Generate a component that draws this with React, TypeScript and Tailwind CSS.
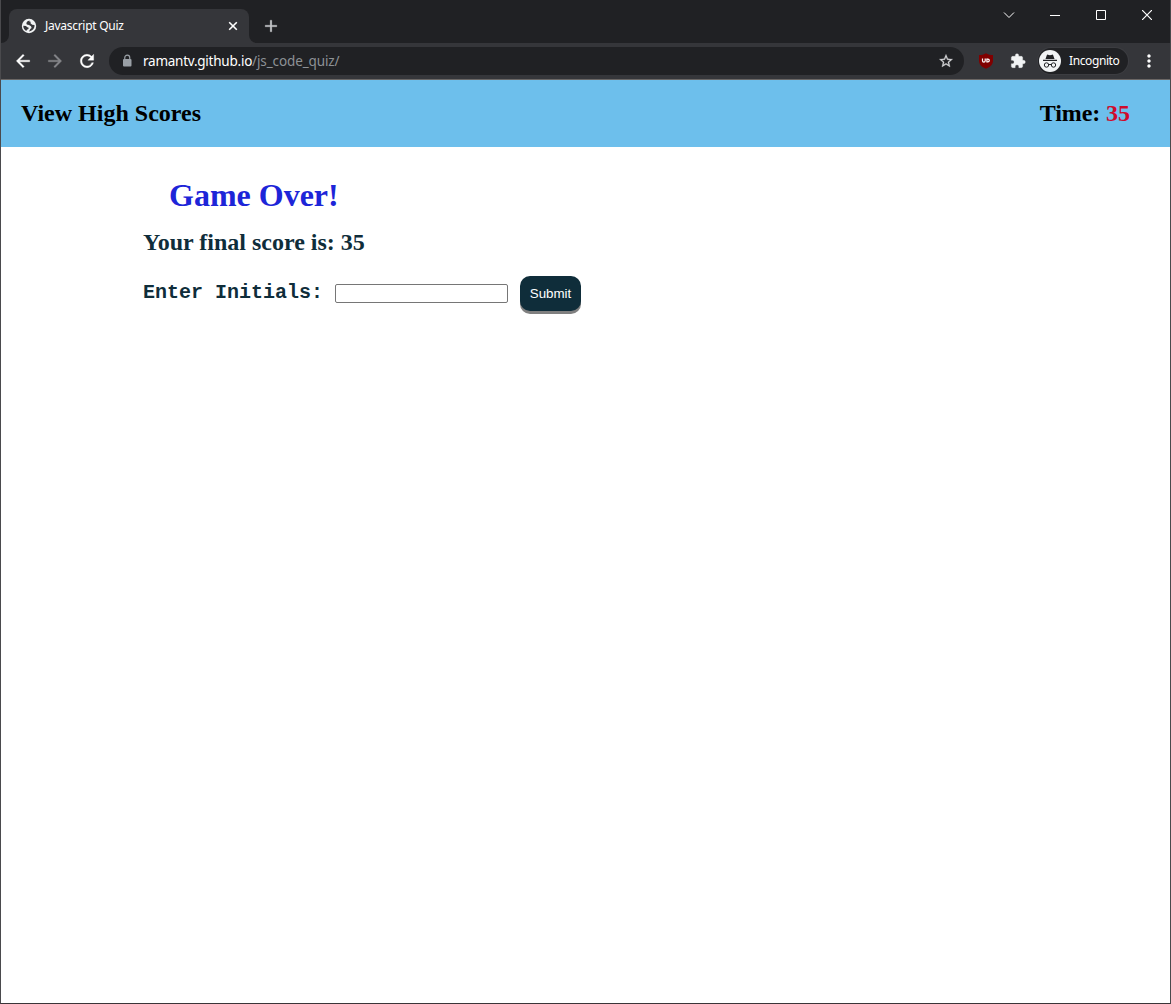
import { MdArrowBack, MdArrowForward, MdRefresh, MdStarBorder, MdExtension, MdMoreVert, MdAdd } from "react-icons/md";

function GlobeIcon() {
  return (
    <svg width="16" height="16" viewBox="0 0 16 16" className="mr-2 shrink-0">
      <circle cx="8" cy="8" r="7.2" fill="#f1f3f4" />
      <path d="M8.6 2.4 6.5 3.3 5.3 5l.5 1.6 2.2.5 2 1.1.6 1.7-1.3 1.2-1.3 2.4c2.2-.2 4.2-1.5 5-3.4.5-1.1.6-2 .5-3l-2.300-.3-1.700-1.500.2-1.500-1.400-.4zM2.300 7.700l2.600.3 1.500 1.200 1.300.6-.3 1.300-1.500.6-.6 1.300C3.300 11.900 2.200 10 2.300 7.700z" fill="#35363a" />
    </svg>
  );
}

function LockIcon() {
  return (
    <svg width="14" height="14" viewBox="0 0 14 14" className="shrink-0">
      <rect x="3" y="5" width="8.500" height="7.500" rx="1" fill="#9aa0a6" />
      <path d="M4.750 5.500V3.700a2.500 2.500 0 0 1 5 0v1.800" fill="none" stroke="#9aa0a6" strokeWidth="1.200" />
    </svg>
  );
}

function ShieldIcon() {
  return (
    <svg width="16" height="16" viewBox="0 0 16 16" className="ml-3.5 shrink-0">
      <path d="M8 .3c2 1.300 4.300 1.800 7 1.800v5.400c0 4.200-2.700 6.500-7 8.200-4.300-1.700-7-4-7-8.200V2.100C3.700 2.100 6 1.600 8 .3z" fill="#800000" />
      <path d="M4.500 5.500v2.200a1.350 1.350 0 0 0 2.700 0V5.500M8.900 6.100h1a1.400 1.400 0 0 1 0 2.800h-1z" fill="none" stroke="#fff" strokeWidth="1.200" />
    </svg>
  );
}

function IncognitoIcon() {
  return (
    <svg width="22" height="22" viewBox="0 0 22 22" className="shrink-0">
      <circle cx="11" cy="11" r="11" fill="#f1f3f4" />
      <path d="M4 9.800h14V11H4zM6.500 8.900l1.300-3.700c.2-.5.6-.7 1.100-.5l2.100.5 2.100-.5c.5-.2.9 0 1.100.5l1.300 3.700z" fill="#202124" />
      <g fill="none" stroke="#202124">
        <circle cx="7.500" cy="15" r="2.200" />
        <circle cx="14.500" cy="15" r="2.200" />
        <path d="M9.700 14.700q1.300-.6 2.600 0" />
      </g>
    </svg>
  );
}

function WindowControls() {
  return (
    <div className="ml-auto flex h-[30px] text-white">
      <span className="grid w-[46px] place-items-center">
        <svg width="12" height="12" viewBox="0 0 12 12" fill="none" stroke="currentColor"><path d="m1 3.500 5 5 5-5" /></svg>
      </span>
      <span className="grid w-[46px] place-items-center">
        <svg width="10" height="10" viewBox="0 0 10 10" fill="none" stroke="currentColor"><path d="M0 5.500h10" /></svg>
      </span>
      <span className="grid w-[46px] place-items-center">
        <svg width="10" height="10" viewBox="0 0 10 10" fill="none" stroke="currentColor"><path d="M.5.500h9v9h-9z" /></svg>
      </span>
      <span className="grid w-[46px] place-items-center">
        <svg width="10" height="10" viewBox="0 0 10 10" fill="none" stroke="currentColor"><path d="m0 0 10 10M10 0 0 10" strokeWidth="1.200" /></svg>
      </span>
    </div>
  );
}

function TabStrip() {
  return (
    <div className="flex h-[43px] items-start bg-[#202124]">
      <div className="flex h-[43px] items-end">
        <span className="h-2 w-2 bg-[#35363a]"><span className="block h-2 w-2 rounded-br-lg bg-[#202124]" /></span>
        <div className="flex h-[34px] w-[240px] items-center rounded-t-lg bg-[#35363a] pr-2 pl-3">
          <GlobeIcon />
          <span className="text-[12px] tracking-[-0.28px] text-white">Javascript Quiz</span>
          <svg width="16" height="16" viewBox="0 0 16 16" className="ml-auto" stroke="#fff" strokeWidth="1.600">
            <path d="m4.200 4.200 7.600 7.600M11.800 4.200l-7.600 7.600" />
          </svg>
        </div>
        <span className="h-2 w-2 bg-[#35363a]"><span className="block h-2 w-2 rounded-bl-lg bg-[#202124]" /></span>
      </div>
      <MdAdd className="mt-4 ml-1 size-5 stroke-[#c8c9cc] stroke-[0.3px] text-[#c8c9cc] [&>path[fill=none]]:hidden" />
      <WindowControls />
    </div>
  );
}

function Toolbar() {
  return (
    <div className="flex h-9 items-center bg-[#35363a] pl-3 text-white [&_path[fill=none][d^='M0_0h24']]:hidden">
      <MdArrowBack className="size-5 stroke-white stroke-[0.4px] [&>path[fill=none]]:hidden" />
      <MdArrowForward className="ml-3 size-5 stroke-[#85868a] stroke-[0.4px] text-[#85868a] [&>path[fill=none]]:hidden" />
      <MdRefresh className="ml-3 size-5 stroke-white stroke-[0.4px] [&>path[fill=none]]:hidden" />
      <div className="ml-3 flex h-7 w-[855px] items-center rounded-full bg-[#202124] pr-2.5 pl-[11px]">
        <LockIcon />
        <span className="ml-[9px] text-[13.5px] tracking-[-0.12px] text-[#8d9196]"><span className="tracking-[-0.24px] text-white">ramantv.github.io</span>/js_code_quiz/</span>
        <MdStarBorder className="ml-auto size-4 stroke-[#d5d6d8] stroke-[0.4px] text-[#d5d6d8] [&>path[fill=none]]:hidden" />
      </div>
      <ShieldIcon />
      <MdExtension className="ml-4 size-4 stroke-[#f1f3f4] stroke-[0.5px] text-[#f1f3f4] [&>path[fill=none]]:hidden" />
      <div className="ml-3 flex h-[26px] w-[90px] items-center rounded-full bg-[#202124] pl-px ring-1 ring-[#3c3d41]">
        <IncognitoIcon />
        <span className="ml-2 text-[12px] tracking-[-0.4px]">Incognito</span>
      </div>
      <MdMoreVert className="ml-[11px] size-5" />
    </div>
  );
}

export default function App() {
  return (
    <div className="flex h-[1004px] w-[1171px] flex-col border-x border-b border-x-[#4a4a4d] border-b-[#3a3538] bg-white">
      <div className="font-['Noto_Sans',sans-serif]">
        <TabStrip />
        <Toolbar />
        <div className="h-px bg-[#6b6765]" />
      </div>
      <header className="flex h-[67px] items-center justify-between bg-[#6dbfec] pr-10 pb-0.5 pl-5 font-['Liberation_Serif',serif] text-[24px] font-bold text-black">
        <a>View High Scores</a>
        <div><span className="tracking-[-0.1px]">Time: </span><span className="text-[#cf0a2c]">35</span></div>
      </header>
      <main className="flex flex-col items-start pl-[142px] font-['Liberation_Serif',serif] text-[#0f2d3a]">
        <h1 className="mt-[30px] ml-[26px] text-[32px] leading-9 font-bold text-[#1d25d8]">Game Over!</h1>
        <h2 className="mt-[15px] text-[24px] leading-7 font-bold">Your final score is: 35</h2>
        <form className="mt-5 flex items-center">
          <label className="pb-0.5 font-['Liberation_Mono',monospace] text-[20px] leading-6 font-bold">Enter Initials:</label>
          <input className="ml-3 h-[19px] w-[173px] rounded-[2px] border border-[#767676] bg-white" />
          <button type="button" className="ml-3 h-[35px] w-[61px] rounded-[10px] bg-[#0f2d3a] font-['Liberation_Sans',sans-serif] text-[13.333px] text-white shadow-[0_3px_0_#808080]">Submit</button>
        </form>
      </main>
    </div>
  );
}
